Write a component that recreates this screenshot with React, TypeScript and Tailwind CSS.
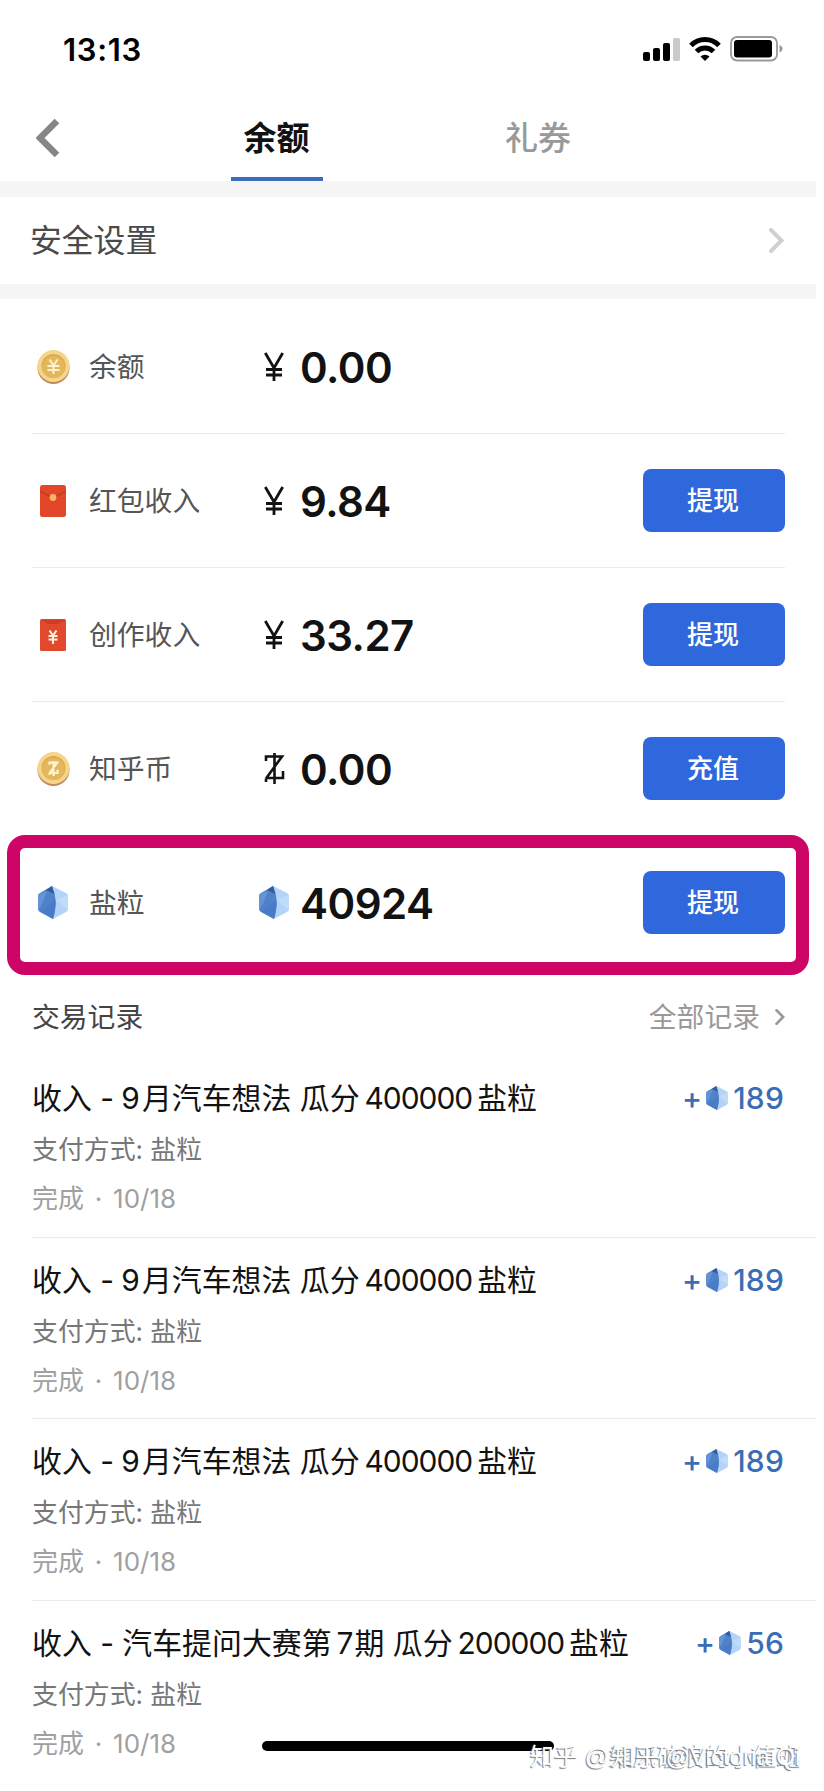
import type { ReactNode } from 'react';

const Crystal = ({ className }: { className: string }) => (
    <svg viewBox="0 0 30 33" className={className}>
        <path d="M14 0L28 7q2 1 2 3v13q0 2-2 3l-13 7z" fill="#b4d3f8" />
        <path d="M18 14L30 9v15z" fill="#c1dcfa" />
        <path d="M14 0L2 7Q0 8 0 10v13q0 2 2 3l13 7q3-10 2.500-19Q17 6 14 0z" fill="#5182c9" />
        <path d="M1 8l8-3-5 13-4 6V10q0-1 1-2z" fill="#6394d6" />
        <path d="M14 0L8 4l8 4z" fill="#315b9c" />
        <path d="M17.500 14L2 25.500l13 7.500q3-10 2.500-19z" fill="#497cc6" />
    </svg>
);

const ZPath = 'M2 8V3.5h16L2 25.500M2 25h17V18M10.500 0v31M2 25.500V29';

const Coin = ({ children }: { children: ReactNode }) => (
    <svg viewBox="0 0 33 34" className="w-[33px] h-[34px]">
        <circle cx="16.500" cy="18" r="16" fill="#bd8a5c" />
        <circle cx="16.500" cy="16" r="16" fill="#f5d58c" />
        <circle cx="16.500" cy="16" r="12" fill="#dcaa48" />
        <circle cx="16.500" cy="17" r="11.200" fill="#e3b85c" />
        {children}
    </svg>
);

const YenCoin = () => (
    <Coin>
        <path d="M12.500 9.500l4 6 4-6M16.500 15.500V24M10.500 16h12M10.500 20h12" fill="none" stroke="#fff0d0" strokeWidth="2" />
    </Coin>
);

const ZhihuCoin = () => (
    <Coin>
        <path d={ZPath} transform="translate(11.500 9) scale(.48)" fill="none" stroke="#fff3cf" strokeWidth="4.500" />
    </Coin>
);

const RedPacket = () => (
    <svg viewBox="0 0 26 32" className="w-[26px] h-8">
        <rect width="26" height="32" rx="2.500" fill="#e2472a" />
        <path d="M0 6l13 7 13-7" fill="none" stroke="#b83c22" strokeWidth="1.200" />
        <circle cx="13" cy="12.500" r="3.400" fill="#f8b660" />
    </svg>
);

const YenPacket = () => (
    <svg viewBox="0 0 26 32" className="w-[26px] h-8">
        <rect width="26" height="32" rx="1.500" fill="#e2492c" />
        <path d="M1 1h24l-7 4H8z" fill="#cf3d22" />
        <path d="M9.500 11.500l3.500 5 3.500-5M13 16v9M8.500 17h9M8.500 20.500h9" fill="none" stroke="#fff0dc" strokeWidth="2.100" />
    </svg>
);

const YenSign = () => (
    <svg viewBox="0 0 20 30" className="w-5 h-[30px]">
        <path d="M1.300 1l8.700 15L18.700 1M10 15v14M2 17.500h16M2 23h16" fill="none" stroke="#121212" strokeWidth="2.800" />
    </svg>
);

const ZhihuSign = () => (
    <svg viewBox="0 0 21 31" className="w-[21px] h-[31px]">
        <path d={ZPath} fill="none" stroke="#121212" strokeWidth="2.600" />
    </svg>
);

const Chevron = ({ className, stroke }: { className: string; stroke: number }) => (
    <svg viewBox="0 0 15 25" className={className} fill="none" stroke="currentColor" strokeWidth={stroke}>
        <path d="M2 2l10.500 10.500L2 23" strokeLinecap="round" />
    </svg>
);

const accounts = [
    { label: '余额', icon: <YenCoin />, sign: <YenSign />, amount: '0.00', action: '' },
    { label: '红包收入', icon: <RedPacket />, sign: <YenSign />, amount: '9.84', action: '提现' },
    { label: '创作收入', icon: <YenPacket />, sign: <YenSign />, amount: '33.27', action: '提现' },
    { label: '知乎币', icon: <ZhihuCoin />, sign: <ZhihuSign />, amount: '0.00', action: '充值' },
    {
        label: '盐粒',
        icon: <Crystal className="w-[30px] h-[33px]" />,
        sign: <Crystal className="w-[30px] h-[33px]" />,
        amount: '40924',
        action: '提现',
    },
];

const CarTitle = () => (
    <>
        收入 - <span className="-ml-px mr-[2px]">9</span>月汽车想法 瓜分
        <span className="ml-[5px] mr-[5px] tracking-[-1px]">400000</span>盐粒
    </>
);

const ContestTitle = () => (
    <>
        收入 - 汽车提问大赛第<span className="ml-[5px] mr-px">7</span>期 瓜分
        <span className="ml-[5px] mr-[5px] tracking-[-1px]">200000</span>盐粒
    </>
);

const records = [
    { title: <CarTitle />, amount: '189' },
    { title: <CarTitle />, amount: '189' },
    { title: <CarTitle />, amount: '189' },
    { title: <ContestTitle />, amount: '56' },
];

const StatusBar = () => (
    <div className="flex h-[98px] items-start justify-between pl-[63px] pr-[41px] pt-9">
        <span className="mt-px text-[31px] leading-[26px] font-semibold tracking-[0.7px] text-black">13:13</span>
        <div className="flex items-center">
            <svg viewBox="0 0 37 24" className="w-[37px] h-6">
                <rect x="0" y="15" width="7" height="9" rx="2" />
                <rect x="10" y="11" width="7" height="13" rx="2" />
                <rect x="20" y="6" width="7" height="18" rx="2" />
                <rect x="30" y="1" width="7" height="23" rx="1.500" fill="#cacaca" />
            </svg>
            <svg viewBox="0 0 32 24" className="ml-[9px] w-8 h-6">
                <path d="M2 8.500a19.500 19.500 0 0 1 28 0M7.500 14.500a12 12 0 0 1 17 0" fill="none" stroke="#000" strokeWidth="5" />
                <path d="M11.500 19.500a6.500 6.500 0 0 1 9 0L16 24z" />
            </svg>
            <svg viewBox="0 0 53 26" className="ml-[9px] w-[53px] h-[26px]">
                <rect x="1" y="1" width="46" height="23.500" rx="6" fill="none" stroke="#999" strokeWidth="1.800" />
                <rect x="4" y="4" width="38" height="17.500" rx="3" />
                <path d="M49.500 9v7.500q3-1 3-3.700T49.500 9z" fill="#999" />
            </svg>
        </div>
    </div>
);

export default function App() {
    return (
        <div className="relative h-[1791px] w-[824px] overflow-hidden bg-white font-['Inter','Noto_Sans_CJK_SC',sans-serif] text-[#121212]">
            <StatusBar />

            <div className="flex h-[83px] w-[816px]">
                <svg viewBox="0 0 24 40" className="ml-9 mt-5 h-10 w-6">
                    <path d="M21 3L4 20l17 17" fill="none" stroke="#868686" strokeWidth="6.500" />
                </svg>
                <div className="ml-[171px] flex w-[92px] flex-col items-center justify-between">
                    <span className="mt-4 whitespace-nowrap pr-px text-[33px] leading-[48px] font-bold">余额</span>
                    <span className="h-1 w-full bg-[#3b6dbd]" />
                </div>
                <span className="ml-[182px] mt-4 text-[33px] leading-[48px] font-medium text-[#999]">礼券</span>
            </div>

            <div className="flex h-[118px] w-[816px] items-center justify-between border-y-[16px] border-b-[15px] border-[#f5f5f5] pl-[30px] pr-8">
                <span className="text-[31.8px] leading-[48px] text-[#4a4a4a]">安全设置</span>
                <Chevron className="h-[25px] w-[15px] text-[#d0d0d0]" stroke={4} />
            </div>

            <div className="pl-8 pr-[39px]">
                {accounts.map((a, i) => (
                    <div
                        key={a.label}
                        className={`flex h-[134px] items-center border-b ${i < 3 ? 'border-[#ebebeb]' : 'border-transparent'} ${i === 0 ? 'mt-px' : ''}`}
                    >
                        <div className="flex w-[43px] justify-center pr-px">{a.icon}</div>
                        <span className="ml-[14px] mt-px w-[169px] text-[27.8px] leading-10 text-[#555]">{a.label}</span>
                        <div className="flex w-[42px] justify-start pl-[1px]">
                            <div className={i === 4 ? '' : 'ml-[5px]'}>{a.sign}</div>
                        </div>
                        <span className="mt-[2px] text-[42px] leading-[50px] font-semibold tracking-[-0.5px]">{a.amount}</span>
                        {a.action && (
                            <button className="ml-auto h-[63px] w-[142px] rounded-lg bg-[#2f68dc] pr-[2px] text-[26px] font-medium text-white">
                                {a.action}
                            </button>
                        )}
                    </div>
                ))}
            </div>

            {/* highlight around the salt row */}
            <div className="absolute left-[7px] top-[835px] h-[140px] w-[802px] rounded-[18px] border-[13px] border-[#cc0566]" />

            <div className="flex h-[86px] items-center justify-between pl-8 pr-[39px] pt-2">
                <span className="text-[27.8px] leading-10 text-[#444]">交易记录</span>
                <div className="flex items-center text-[#999]">
                    <span className="text-[27.8px] leading-10">全部记录</span>
                    <Chevron className="ml-[15px] h-4 w-[10px]" stroke={4} />
                </div>
            </div>

            <div className="ml-8 w-[784px]">
                {records.map((r, i) => (
                    <div key={i} className={`h-[181.5px] pr-8 ${i < 3 ? 'border-b border-[#ebebeb]' : ''}`}>
                        <div className="flex items-center justify-between pt-5">
                            <div className="whitespace-nowrap text-[29.9px] leading-[44px]">{r.title}</div>
                            <div className="flex items-center text-[30px] leading-[44px] font-medium tracking-[0.2px] text-[#3b6db5]">
                                +
                                <Crystal className="ml-1 mr-[5px] h-6 w-[22px]" />
                                {r.amount}
                            </div>
                        </div>
                        <div className="mt-[10px] text-[25.9px] leading-[40px] text-[#777]">支付方式: 盐粒</div>
                        <div className="mt-[9px] text-[26px] leading-[40px] text-[#a0a0a0] [word-spacing:3.5px]">完成 · 10/18</div>
                    </div>
                ))}
            </div>

            <div className="absolute left-[262px] top-[1741px] h-[10px] w-[292px] rounded-full bg-black" />
            <div className="absolute left-[530px] top-[1737px] whitespace-nowrap font-['Liberation_Sans','Noto_Sans_CJK_SC',sans-serif] text-[24px] leading-10 text-white [text-shadow:-1px_1px_1px_#777]">
                知乎 @乘风破浪的小值班
            </div>
            <div className="absolute left-[611px] top-[1737px] whitespace-nowrap font-['Liberation_Sans','Noto_Sans_CJK_SC',sans-serif] text-[24px] leading-10 text-white [text-shadow:-1px_1px_1px_#777]">
                知乎 @Victoria Qi
            </div>
        </div>
    );
}
